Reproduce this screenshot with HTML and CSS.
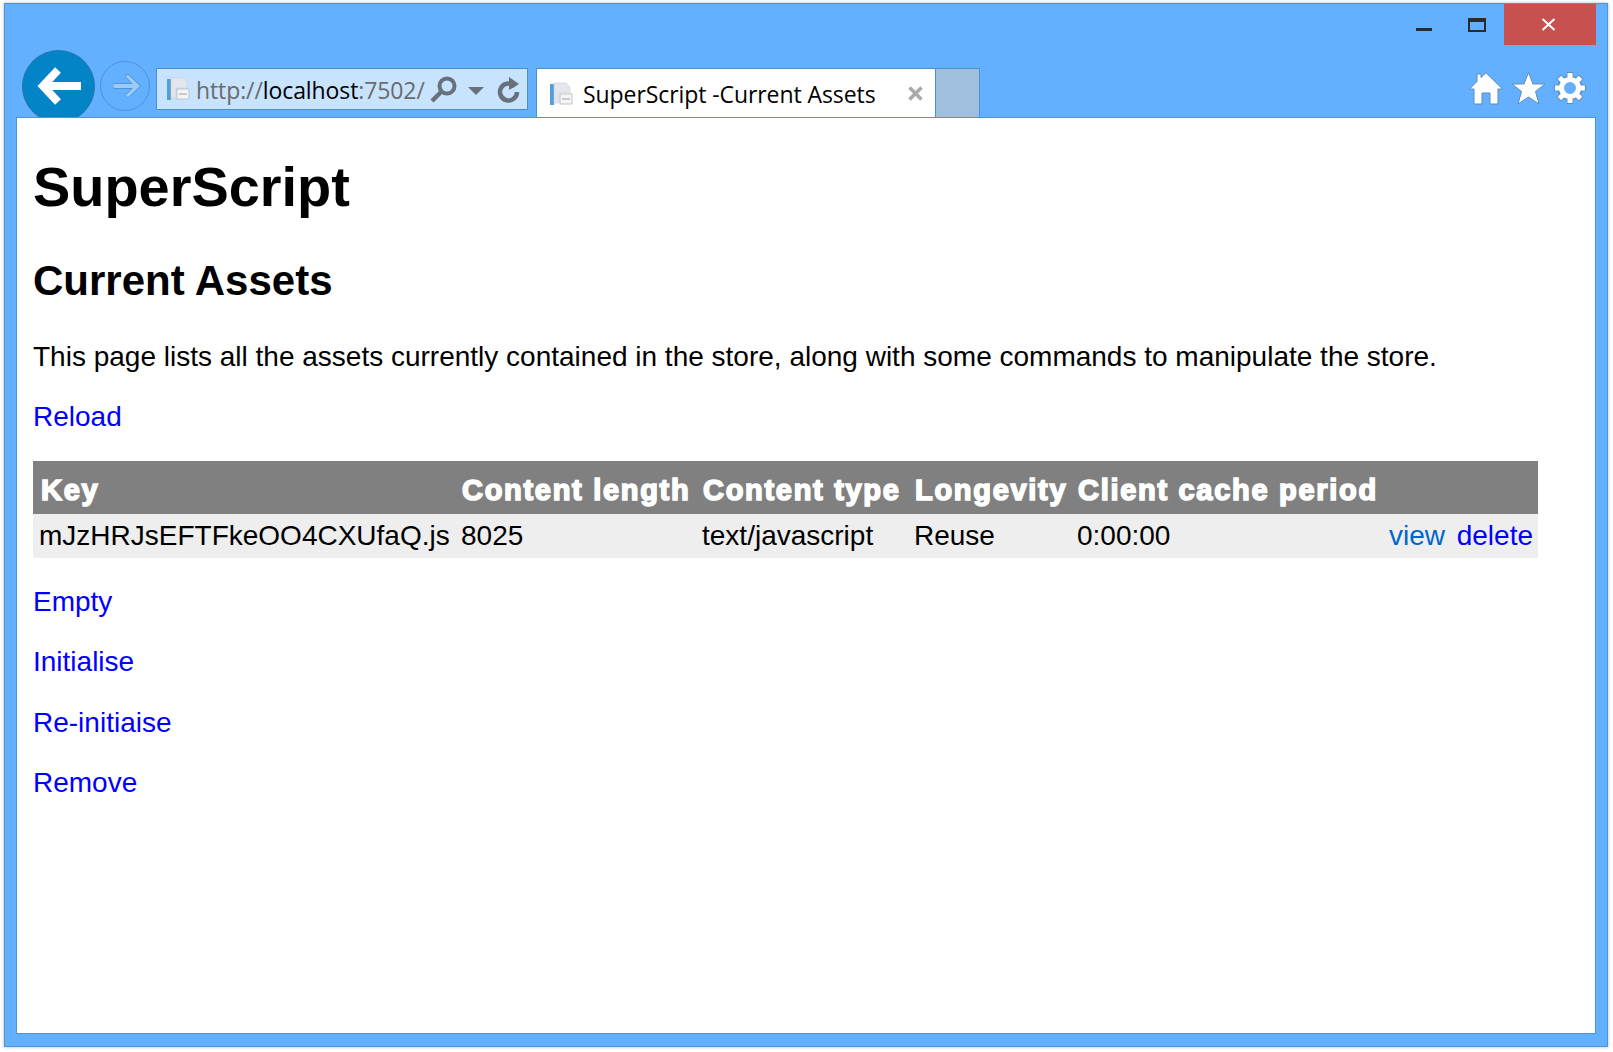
FILE: index.html
```html
<!DOCTYPE html>
<html lang="en">
<head>
    <meta charset="UTF-8">
    <title>SuperScript -Current Assets</title>
    <link rel="stylesheet" href="styles.css">
</head>
<body>
    <div class="window">
        <div class="caption">
            <div class="caption-btn minimize">
                <svg width="18" height="5" viewBox="0 0 18 5"><rect y="1" width="16" height="3" fill="#2b2b2b"/></svg>
            </div>
            <div class="caption-btn restore">
                <svg width="18" height="14" viewBox="0 0 18 14"><path d="M0 0H18V14H0ZM2 4V12H16V4Z" fill="#2b2b2b" fill-rule="evenodd"/></svg>
            </div>
            <div class="caption-btn close">
                <svg width="15" height="13" viewBox="0 0 15 13"><path d="M1.500 1L13.500 12M13.500 1L1.500 12" stroke="#fff" stroke-width="2" fill="none"/></svg>
            </div>
        </div>
        <div class="toolbar">
            <div class="nav-back">
                <svg width="44" height="40" viewBox="0 0 44 40"><path d="M21 3L6 19L21 35M6 19H44" stroke="#fff" stroke-width="8" fill="none"/></svg>
            </div>
            <div class="nav-forward">
                <svg width="29" height="24" viewBox="0 0 29 24"><path d="M0 9.500H19L12 2.500L15 0L27.500 12L15 24L12 21.500L19 14.500H0Z" fill="#9ccbf7" stroke="#4f94d4"/></svg>
            </div>
            <div class="address">
                <svg class="page-icon" width="24" height="24" viewBox="0 0 24 24">
                    <path d="M1 2H5V23H1Z" fill="#4f9fd9"/>
                    <path d="M5 1H17L21 5V11H10V21H5Z" fill="#e3e7ec" stroke="#c9ced4" stroke-width=".6"/>
                    <rect x="11" y="12" width="12" height="10" fill="#f2f4f6" stroke="#bfc5cb"/>
                    <path d="M13 17H21" stroke="#c5cbd1" stroke-width="2"/>
                </svg>
                <span class="url"><span class="dim">http://</span>localhost<span class="dim">:7502/</span></span>
                <svg class="search-icon" width="27" height="27" viewBox="0 0 27 27"><circle cx="17" cy="10" r="7.500" fill="none" stroke="#66717c" stroke-width="4"/><path d="M11 16L2 25" stroke="#66717c" stroke-width="4.500"/></svg>
                <svg class="drop-icon" width="16" height="8" viewBox="0 0 16 8"><path d="M0 0H16L8 8Z" fill="#66717c"/></svg>
                <svg class="refresh-icon" width="23" height="27" viewBox="0 0 23 27"><path d="M18 10.500A8.500 8.500 0 1 0 20 16" fill="none" stroke="#66717c" stroke-width="4.500"/><path d="M12 1L22 8L12 14Z" fill="#66717c"/></svg>
            </div>
            <div class="tab">
                <svg class="page-icon" width="24" height="24" viewBox="0 0 24 24">
                    <path d="M1 2H5V23H1Z" fill="#4f9fd9"/>
                    <path d="M5 1H17L21 5V11H10V21H5Z" fill="#e3e7ec" stroke="#c9ced4" stroke-width=".6"/>
                    <rect x="11" y="12" width="12" height="10" fill="#f2f4f6" stroke="#bfc5cb"/>
                    <path d="M13 17H21" stroke="#c5cbd1" stroke-width="2"/>
                </svg>
                <span class="tab-title">SuperScript -Current Assets</span>
                <svg class="tab-close" width="15" height="15" viewBox="0 0 15 15"><path d="M1.500 1.500L13.500 13.500M13.500 1.500L1.500 13.500" stroke="#a9a9a9" stroke-width="3.500"/></svg>
            </div>
            <div class="new-tab"></div>
            <div class="tools">
                <svg width="34" height="33" viewBox="0 0 34 33"><path d="M.500 17L8 9.500V2H12V5.500L17 .800L33.500 17H29V32H21V21H13V32H5V17Z" fill="#fff" stroke="#5b8db8"/></svg>
                <svg width="33" height="33" viewBox="0 0 33 33"><path d="M16.500 .500L21 12H33L23.500 19.500L27 32L16.500 25L6 32L9.500 19.500L0 12H12Z" fill="#fff" stroke="#5b8db8"/></svg>
                <svg width="32" height="32" viewBox="0 0 32 32">
                    <path d="M16 0V32M0 16H32M4.700 4.700L27.300 27.300M27.300 4.700L4.700 27.300" stroke="#5b8db8" stroke-width="6.500"/>
                    <circle cx="16" cy="16" r="9" fill="none" stroke="#5b8db8" stroke-width="7"/>
                    <path d="M16 1V31M1 16H31M5.400 5.400L26.600 26.600M26.600 5.400L5.400 26.600" stroke="#fff" stroke-width="5"/>
                    <circle cx="16" cy="16" r="8.500" fill="#62b0ff" stroke="#fff" stroke-width="5"/>
                </svg>
            </div>
        </div>
        <div class="content">
            <h1>SuperScript</h1>
            <h2>Current Assets</h2>
            <p>This page lists all the assets currently contained in the store, along with some commands to manipulate the store.</p>
            <p><a href="#">Reload</a></p>
            <table class="assets">
                <thead>
                    <tr>
                        <th class="col-key">Key</th>
                        <th class="col-length">Content length</th>
                        <th class="col-type">Content type</th>
                        <th class="col-longevity">Longevity</th>
                        <th class="col-cache">Client cache period</th>
                        <th></th>
                    </tr>
                </thead>
                <tbody>
                    <tr>
                        <td>mJzHRJsEFTFkeOO4CXUfaQ.js</td>
                        <td>8025</td>
                        <td>text/javascript</td>
                        <td>Reuse</td>
                        <td>0:00:00</td>
                        <td class="actions"><a class="visited" href="#">view</a> <a href="#">delete</a></td>
                    </tr>
                </tbody>
            </table>
            <p class="after-table"><a href="#">Empty</a></p>
            <p><a href="#">Initialise</a></p>
            <p><a href="#">Re-initiaise</a></p>
            <p><a href="#">Remove</a></p>
        </div>
    </div>
</body>
</html>
```

FILE: styles.css
```css
html, body {
    margin: 0;
    background: #fff;
}

body {
    padding: 3px 5px 5px 4px;
    height: 1052px;
    box-sizing: border-box;
    overflow: hidden;
    font-family: "Liberation Sans", Arial, sans-serif;
}

.window {
    height: 1044px;
    box-sizing: border-box;
    display: flex;
    flex-direction: column;
    background: #62b0ff;
    border: 1px solid #4f94d4;
    box-shadow: 0 0 3px #b5b5b5;
    padding: 0 11px 12px 11px;
}

.caption {
    height: 41px;
    display: flex;
    justify-content: flex-end;
    align-items: flex-start;
    flex-shrink: 0;
}

.caption-btn {
    width: 50px;
    height: 41px;
    display: flex;
    align-items: center;
    justify-content: center;
}

.minimize {
    height: 27px;
    padding-top: 12px;
    margin-right: 2px;
}

.restore {
    margin-right: 2px;
}

.close {
    width: 89px;
    padding-right: 3px;
    background: #c75050;
}

.toolbar {
    height: 72px;
    flex-shrink: 0;
    display: flex;
    align-items: flex-start;
    overflow: hidden;
    margin-left: -11px;
    margin-right: -11px;
    padding-left: 17px;
}

.nav-back {
    width: 73px;
    height: 73px;
    margin-top: 5px;
    flex-shrink: 0;
    box-sizing: border-box;
    border-radius: 50%;
    background: #0284c6;
    border: 1px solid #2a73a8;
    display: flex;
    align-items: center;
    justify-content: center;
    padding-top: 1px;
}

.nav-forward {
    width: 50px;
    height: 50px;
    margin: 16px 6px 0 5px;
    padding-left: 4px;
    flex-shrink: 0;
    box-sizing: border-box;
    border-radius: 50%;
    border: 1px solid #4f94d4;
    display: flex;
    align-items: center;
    justify-content: center;
}

.address {
    width: 372px;
    height: 42px;
    margin-top: 23px;
    flex-shrink: 0;
    box-sizing: border-box;
    background: #c7e3fe;
    border: 1px solid #4d8fc9;
    display: flex;
    align-items: center;
    padding-left: 9px;
    font-family: "Open Sans", sans-serif;
    font-size: 23px;
    color: #000;
}

.url {
    margin-left: 6px;
    padding-top: 2px;
    white-space: nowrap;
    width: 227px;
    letter-spacing: -.1px;
}

.dim {
    color: #6b6b6b;
}

.search-icon {
    margin-left: 7px;
}

.drop-icon {
    margin-left: 11px;
    margin-top: 3px;
}

.refresh-icon {
    margin-left: 13px;
}

.tab {
    width: 400px;
    height: 50px;
    margin: 23px 0 0 8px;
    flex-shrink: 0;
    box-sizing: border-box;
    background: #fff;
    border: 1px solid #4d8fc9;
    border-bottom: none;
    display: flex;
    align-items: center;
    padding-left: 12px;
    font-family: "Open Sans", sans-serif;
    font-size: 23px;
}

.tab-title {
    margin-left: 10px;
    white-space: nowrap;
    letter-spacing: -.08px;
}

.tab-close {
    margin-left: auto;
    margin-right: 12px;
}

.new-tab {
    width: 44px;
    height: 50px;
    margin-top: 23px;
    flex-shrink: 0;
    box-sizing: border-box;
    background: #a0bfdc;
    border: 1px solid #4d8fc9;
    border-left: none;
    border-bottom: none;
}

.tools {
    margin-left: auto;
    margin-top: 27px;
    padding-right: 21px;
    display: flex;
    gap: 9px;
}

.content {
    flex: 1;
    background: #fff;
    border: 1px solid #4f94d4;
    padding: 16px 16px;
    color: #000;
    font-size: 28px;
}

h1 {
    font-size: 55.9px;
    margin: 20px 0 0;
}

h2 {
    font-size: 42px;
    margin: 38px 0 36px;
}

p {
    margin: 28.4px 0 0;
}

h2 + p {
    margin-top: 0;
}

p.after-table {
    margin-top: 27.4px;
}

a {
    color: #0000ff;
    text-decoration: none;
}

a.visited {
    color: #0066cc;
}

.assets {
    width: 1505px;
    margin-top: 28px;
    border-collapse: collapse;
    table-layout: fixed;
}

.assets th {
    background: #808080;
    color: #fff;
    text-align: left;
    font-size: 29px;
    height: 53px;
    padding: 5px 0 0 8px;
    letter-spacing: 1.7px;
    -webkit-text-stroke: 1.6px #fff;
    white-space: nowrap;
    box-sizing: border-box;
}

.assets td {
    background: #eeeeee;
    height: 44px;
    padding: 0 0 0 7px;
    white-space: nowrap;
    box-sizing: border-box;
}

.assets td:first-child {
    padding-left: 6px;
}

.col-key {
    width: 421px;
}

.col-length {
    width: 241px;
}

.col-type {
    width: 212px;
}

.col-longevity {
    width: 163px;
}

.col-cache {
    width: 310px;
}

.assets td.actions {
    text-align: right;
    padding: 0 5px 0 0;
}

.actions a + a {
    margin-left: 4px;
}
```
